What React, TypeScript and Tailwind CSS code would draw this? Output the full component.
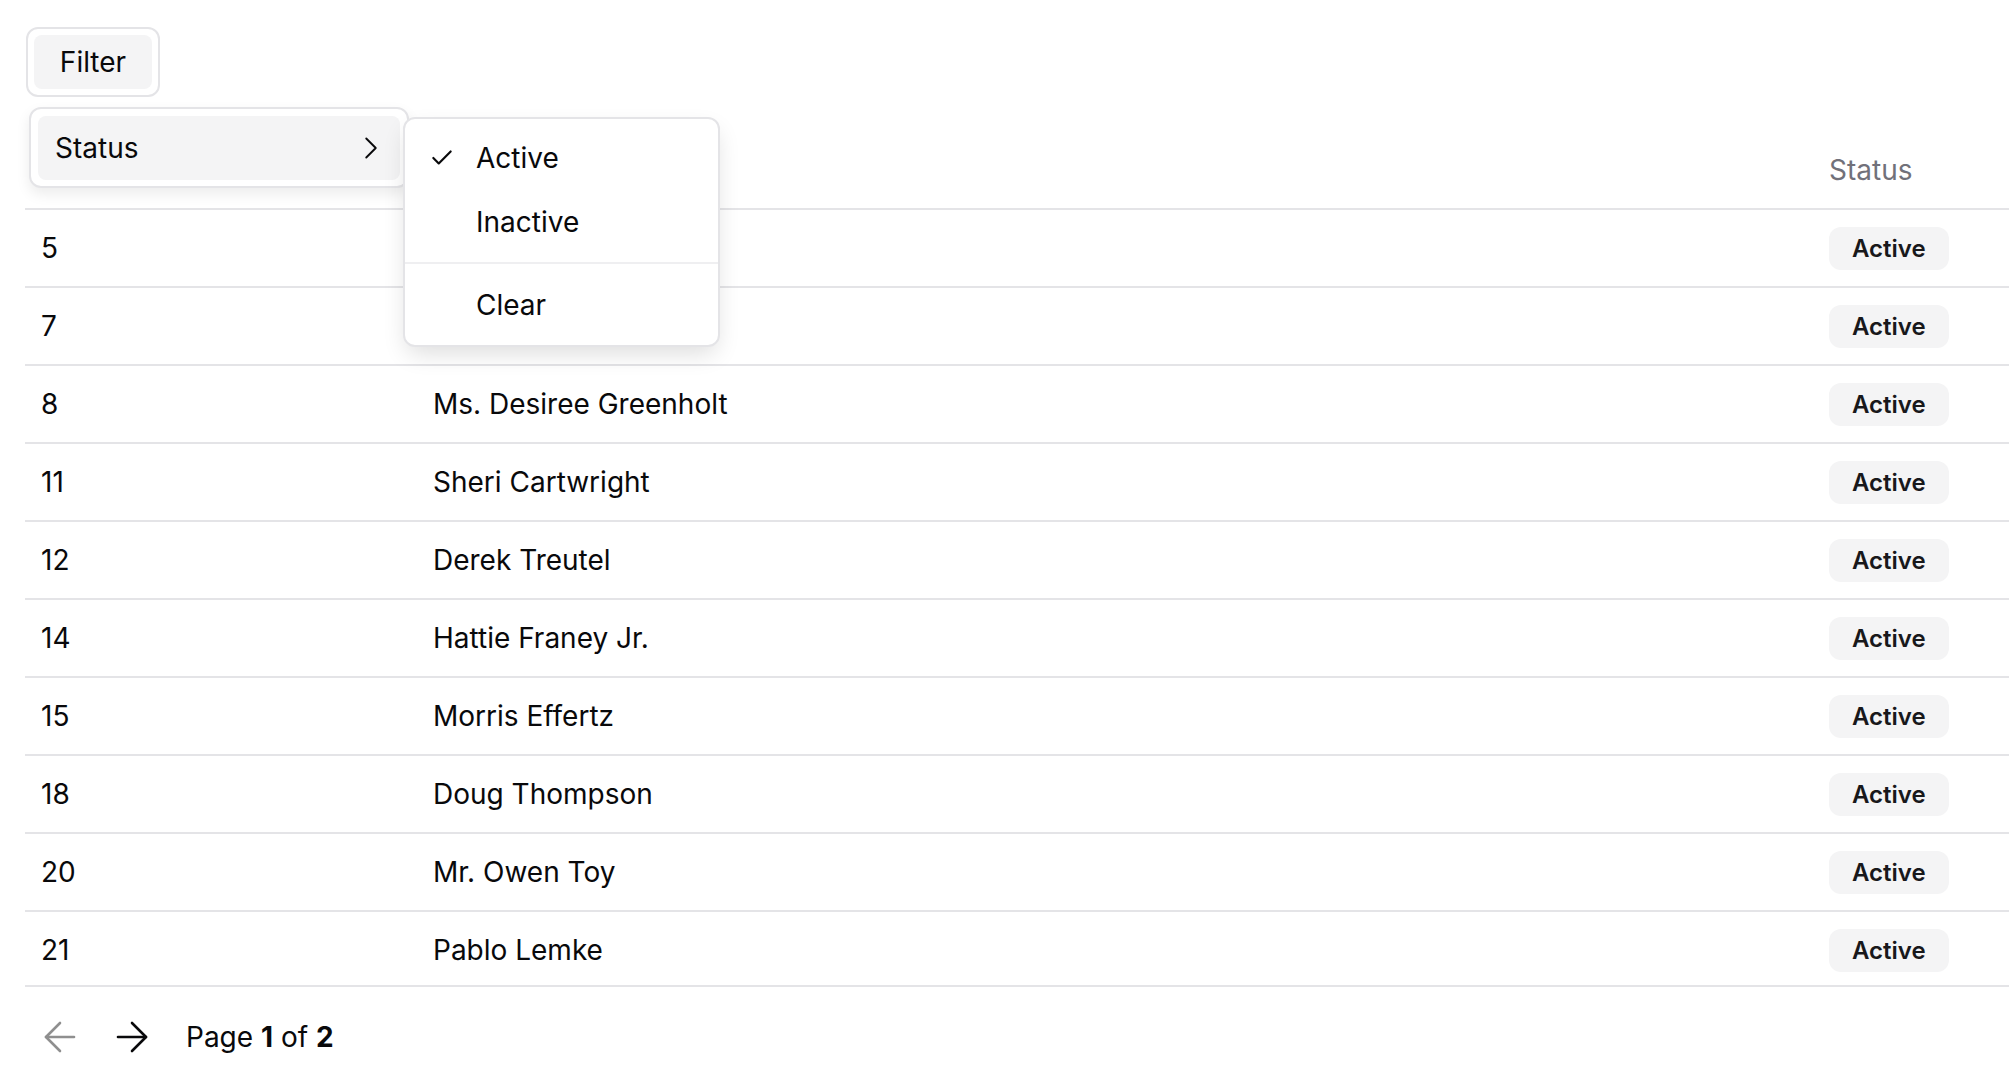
import { ArrowLeft, ArrowRight, Check, ChevronRight } from "lucide-react"

const rows = [
  { id: 5, name: "" },
  { id: 7, name: "" },
  { id: 8, name: "Ms. Desiree Greenholt" },
  { id: 11, name: "Sheri Cartwright" },
  { id: 12, name: "Derek Treutel" },
  { id: 14, name: "Hattie Franey Jr." },
  { id: 15, name: "Morris Effertz" },
  { id: 18, name: "Doug Thompson" },
  { id: 20, name: "Mr. Owen Toy" },
  { id: 21, name: "Pablo Lemke" },
]

export default function App() {
  return (
    <div className="relative h-[1080px] w-full overflow-hidden bg-white font-['Inter',sans-serif] text-[28px] text-[#09090b]">
      <div className="pl-[25px] pt-[27px]">
        {/* Filter trigger */}
        <div className="ml-px h-[70px] w-[134px] rounded-[12px] border-2 border-[#e4e4e7] p-[6px]">
          <div className="flex h-full items-center justify-center rounded-[8px] bg-[#f4f4f5]">Filter</div>
        </div>

        {/* Table (ID / Name headers sit under the open menus) */}
        <div className="mt-[35px] h-[853px] overflow-hidden">
          <div className="grid h-[78px] grid-cols-[392px_1396px_1fr] items-center border-b-2 border-[#e4e4e7] text-[#71717a]">
            <div />
            <div />
            <div className="pl-[16px]">Status</div>
          </div>
          {rows.map((row) => (
            <div
              key={row.id}
              className="grid h-[78px] grid-cols-[392px_1396px_1fr] items-center border-b-2 border-[#e4e4e7]"
            >
              <div className="pl-[16px]">{row.id}</div>
              <div className="pl-[16px]">{row.name}</div>
              <div className="pl-[16px]">
                <span className="inline-flex h-[43px] items-center rounded-[12px] bg-[#f4f4f5] px-[23px] text-[24px] font-semibold text-[#18181b]">
                  Active
                </span>
              </div>
            </div>
          ))}
        </div>

        {/* Pagination */}
        <div className="flex h-[102px] items-center border-t-2 border-[#e4e4e7] pl-[11px]">
          <ArrowLeft size={48} strokeWidth={1.3} className="text-[#8f8f8f]" />
          <ArrowRight size={48} strokeWidth={1.3} className="ml-[24px]" />
          <span className="ml-[30px]">
            Page <b className="font-bold">1</b> of <b className="font-bold">2</b>
          </span>
        </div>
      </div>

      {/* Filter menu */}
      <div className="absolute left-[29px] top-[107px] h-[81px] w-[380px] rounded-[12px] border-2 border-[#e4e4e7] bg-white p-[7px] shadow-[0_6px_14px_rgba(0,0,0,0.08)]">
        <div className="flex h-[64px] items-center justify-between rounded-[8px] bg-[#f4f4f5] pl-[17px] pr-[10px]">
          <span>Status</span>
          <ChevronRight size={38} strokeWidth={1.2} />
        </div>
      </div>

      {/* Status submenu */}
      <div className="absolute left-[403px] top-[117px] w-[317px] rounded-[12px] border-2 border-[#e4e4e7] bg-white pb-[8px] pt-[7px] shadow-[0_10px_24px_-4px_rgba(0,0,0,0.14)]">
        <div className="mx-[7px] flex h-[64px] items-center pl-[17px]">
          <Check size={26} strokeWidth={2} />
          <span className="ml-[21px]">Active</span>
        </div>
        <div className="mx-[7px] flex h-[64px] items-center pl-[17px]">
          <span className="w-[26px]" />
          <span className="ml-[21px]">Inactive</span>
        </div>
        <div className="mb-[9px] mt-[8px] h-[2px] bg-[#efeff1]" />
        <div className="mx-[7px] flex h-[64px] items-center pl-[17px]">
          <span className="w-[26px]" />
          <span className="ml-[21px]">Clear</span>
        </div>
      </div>
    </div>
  )
}
